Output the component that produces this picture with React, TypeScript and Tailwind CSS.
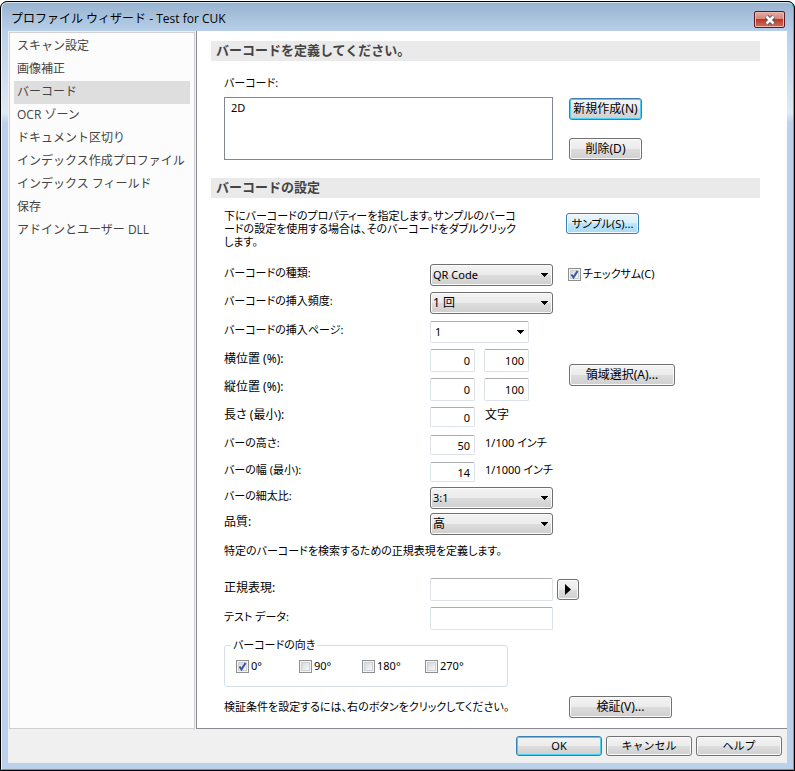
import type { ReactNode } from "react";

const UI = "font-['Noto_Sans','Noto_Sans_CJK_JP',sans-serif]";
const face = "bg-[linear-gradient(#f3f3f3,#ebebeb_50%,#dddddd_50%,#cfcfcf)]";
const faceInset = "border border-[#707070] shadow-[inset_0_0_0_1px_#fbfbfb]";
const faceDefault = "border border-[#3c7fb1] shadow-[inset_0_0_0_1px_#48d1f4]";
const field =
  "border border-[#dde2ea] border-t-[#abadb3] rounded-[2px] bg-white text-[11px] leading-[14px] px-1 outline-none";

function Btn({ className = "", variant = "normal", size = "text-[11px]", children }: { className?: string; variant?: "normal" | "default" | "hot"; size?: string; children: ReactNode }) {
  const look =
    variant === "default"
      ? `${face} ${faceDefault}`
      : variant === "hot"
        ? "border border-[#3c7fb1] shadow-[inset_0_0_0_1px_#f4fbfe] bg-[linear-gradient(#eaf6fd,#d9f0fc_50%,#bee6fd_50%,#a7d9f5)]"
        : `${face} ${faceInset}`;
  return (
    <button type="button" className={`flex shrink-0 items-center justify-center whitespace-nowrap rounded-[3px] leading-[14px] ${size} ${look} ${className}`}>
      {children}
    </button>
  );
}

function Drop({ id, value, plain = false, size = "text-[11px]", className }: { id: string; value: string; plain?: boolean; size?: string; className: string }) {
  const look = plain ? "border border-[#dde2ea] border-t-[#abadb3] rounded-[2px] bg-white pl-1" : `${face} ${faceInset} rounded-[3px] pl-[2px]`;
  return (
    <div className={`relative ${className}`}>
      <select id={id} defaultValue={value} className={`h-[22px] w-full appearance-none leading-[14px] outline-none ${size} ${look}`}>
        <option>{value}</option>
      </select>
      <svg className="pointer-events-none absolute right-[5px] top-[9px] h-1 w-[7px]" viewBox="0 0 7 4" aria-hidden="true" shapeRendering="crispEdges">
        <path d="M0 0h7v1H0zM1 1h5v1H1zM2 2h3v1H2zM3 3h1v1H3z" fill="#000" />
      </svg>
    </div>
  );
}

function Check({ label, checked = false, className = "" }: { label: string; checked?: boolean; className?: string }) {
  return (
    <label className={`flex items-center gap-[2px] whitespace-nowrap ${className}`}>
      <span className="relative flex">
        <input
          type="checkbox"
          defaultChecked={checked}
          className="peer size-[13px] appearance-none border border-[#8e8f8f] bg-[linear-gradient(135deg,#cbcfd5,#f6f6f6_80%)] shadow-[inset_0_0_0_1px_#f4f4f4,inset_0_0_0_2px_#cdd1d6]"
        />
        <svg className="pointer-events-none absolute left-0 top-0 hidden size-[13px] peer-checked:block" viewBox="0 0 13 13" aria-hidden="true">
          <path d="M3.500 6.500L5.500 9.500L9.500 3" fill="none" stroke="#3a559b" strokeWidth="2" />
        </svg>
      </span>
      {label}
    </label>
  );
}

function Row({ id, label, h = "h-7", size = "text-[11px]", children }: { id: string; label: string; h?: string; size?: string; children: ReactNode }) {
  return (
    <div className={`flex items-center ${size} ${h}`}>
      <label htmlFor={id} className="w-[206px] shrink-0 pb-1">{label}</label>
      {children}
    </div>
  );
}

function Num({ id, value, h = "h-5", label }: { id: string; value: string; h?: string; label?: string }) {
  return <input id={id} aria-label={label} defaultValue={value} className={`w-[45px] shrink-0 text-right ${field} ${h}`} />;
}

function Heading({ children }: { children: ReactNode }) {
  return <h2 className="mr-[27px] h-5 bg-[#eaeaea] pl-[5px] font-['Open_Sans','Noto_Sans_CJK_JP',sans-serif] text-[13px] font-bold leading-[18px] text-[#444]">{children}</h2>;
}

const nav = ["スキャン設定", "画像補正", "バーコード", "OCR ゾーン", "ドキュメント区切り", "インデックス作成プロファイル", "インデックス フィールド", "保存", "アドインとユーザー DLL"];

export default function App() {
  return (
    <div className={`min-h-screen bg-white pt-px text-[11px] leading-[14px] text-black ${UI}`}>
      <div className="rounded-t-[7px] border border-black bg-black">
        <div className="flex flex-col rounded-t-[6px] border border-b-[#1fb8d0] border-l-[#e8f2fa] border-r-[#1fc4dc] border-t-[#d3e8f4] bg-[linear-gradient(#99b4d1,#b9d1ea_30px,#dfe9f5_110px,#b9d1ea_120px)] px-[6px] pb-[6px]">
          <header className="flex h-7 items-center justify-between pl-[3px] pr-[2px]">
            <h1 className="pt-1 font-['Open_Sans','Noto_Sans_CJK_JP',sans-serif] text-[12px]">プロファイル ウィザード - Test for CUK</h1>
            <button type="button" aria-label="閉じる" className="mt-[5px] flex h-[17px] w-[31px] items-center justify-center rounded-[2px] border border-[#5a1c22] bg-[linear-gradient(#e5aca4,#d98679_45%,#b93a26_50%,#d0705c)] shadow-[inset_0_0_0_1px_#e9b9b0]">
              <svg className="h-[10px] w-3" viewBox="0 0 12 10" aria-hidden="true">
                <path d="M2.500 1.500L9.500 8.500M9.500 1.500L2.500 8.500" stroke="#535666" strokeWidth="4.500" />
                <path d="M2.500 1.500L9.500 8.500M9.500 1.500L2.500 8.500" stroke="#fff" strokeWidth="2.500" />
              </svg>
            </button>
          </header>
          <div className="flex bg-[#f0f0f0]">
            <nav className="ml-px mt-px w-[186px] shrink-0 border border-[#d0d0d0] bg-[#fcfcfc] px-1 pt-[2px] font-['Open_Sans','Noto_Sans_CJK_JP',sans-serif] text-[12px] text-[#444]">
              <ul>
                {nav.map((n) => (
                  <li key={n}>
                    <a href="#" aria-current={n === "バーコード" ? "page" : undefined} className={`block h-[23px] whitespace-nowrap pl-[3px] leading-[22px] ${n === "バーコード" ? "bg-[#dedede]" : ""}`}>
                      {n}
                    </a>
                  </li>
                ))}
              </ul>
            </nav>
            <main className="ml-px min-w-0 grow border-b border-l border-[#8b8b94] bg-white pb-[10px] pl-[14px] pt-[10px]">
              <Heading>バーコードを定義してください。</Heading>
              <div className="pl-[13px] [font-feature-settings:'palt']">
                <label htmlFor="codes" className="block pt-[15px]">バーコード:</label>
                <div className="flex pt-[7px]">
                  <select id="codes" size={4} className="h-[63px] w-[329px] shrink-0 appearance-none overflow-hidden border border-[#828790] bg-white text-[11px] outline-none">
                    <option className="px-[6px] pt-[2px]">2D</option>
                  </select>
                  <div className="flex flex-col gap-[18px] pl-4 pt-px">
                    <Btn variant="default" size="text-[12px]" className="h-[22px] w-[73px]">新規作成(N)</Btn>
                    <Btn size="text-[12px]" className="h-[22px] w-[73px]">削除(D)</Btn>
                  </div>
                </div>
              </div>
              <div className="h-[18px]" />
              <Heading>バーコードの設定</Heading>
              <div className="pl-[13px] [font-feature-settings:'palt']">
                <div className="flex h-[63px] pt-3">
                  <p className="w-[342px] shrink-0 whitespace-nowrap font-['Liberation_Sans','Noto_Sans_CJK_JP',sans-serif] leading-[13px]">
                    下にバーコードのプロパティーを指定します。サンプルのバーコ
                    <br />
                    ードの設定を使用する場合は、そのバーコードをダブルクリック
                    <br />
                    します。
                  </p>
                  <Btn variant="hot" className="mt-[3px] h-[21px] w-[73px]">サンプル(S)...</Btn>
                </div>
                <Row id="type" label="バーコードの種類:">
                  <Drop id="type" value="QR Code" className="w-[123px]" />
                  <Check label="チェックサム(C)" checked className="ml-[15px] pb-[2px]" />
                </Row>
                <Row id="freq" label="バーコードの挿入頻度:">
                  <Drop id="freq" value="1 回" size="text-[12px]" className="w-[123px]" />
                </Row>
                <Row id="page" label="バーコードの挿入ページ:" h="h-[29px]">
                  <Drop id="page" value="1" plain className="w-[99px]" />
                </Row>
                <div className="flex items-center">
                  <div>
                    <Row id="hx" label="横位置 (%):" h="h-[29px]" size="text-[12px]">
                      <div className="flex gap-[9px]">
                        <Num id="hx" value="0" h="h-[23px]" />
                        <Num id="hx2" label="横位置 終了" value="100" h="h-[23px]" />
                      </div>
                    </Row>
                    <Row id="vy" label="縦位置 (%):" size="text-[12px]">
                      <div className="flex gap-[9px]">
                        <Num id="vy" value="0" h="h-[23px]" />
                        <Num id="vy2" label="縦位置 終了" value="100" h="h-[23px]" />
                      </div>
                    </Row>
                  </div>
                  <Btn size="text-[12px]" className="ml-10 h-[22px] w-[106px]">領域選択(A)...</Btn>
                </div>
                <Row id="len" label="長さ (最小):" size="text-[12px]">
                  <Num id="len" value="0" />
                  <span className="pb-1 pl-[10px]">文字</span>
                </Row>
                <Row id="bh" label="バーの高さ:">
                  <Num id="bh" value="50" />
                  <span className="pb-1 pl-[10px]">1/100 インチ</span>
                </Row>
                <Row id="bw" label="バーの幅 (最小):" h="h-[26px]">
                  <Num id="bw" value="14" />
                  <span className="pb-1 pl-[10px]">1/1000 インチ</span>
                </Row>
                <Row id="ratio" label="バーの細太比:" h="h-[26px]">
                  <Drop id="ratio" value="3:1" className="w-[123px]" />
                </Row>
                <Row id="quality" label="品質:" h="h-[26px]" size="text-[12px]">
                  <Drop id="quality" value="高" size="text-[12px]" className="w-[123px]" />
                </Row>
                <p className="pb-[17px] pt-[7px]">特定のバーコードを検索するための正規表現を定義します。</p>
                <Row id="re" label="正規表現:" h="h-[29px]" size="text-[12px]">
                  <input id="re" className={`h-[23px] w-[123px] ${field}`} />
                  <button type="button" aria-label="挿入" className={`ml-1 flex h-[21px] w-[22px] items-center justify-center rounded-[3px] ${face} ${faceInset}`}>
                    <svg className="h-[11px] w-[6px]" viewBox="0 0 6 11" aria-hidden="true">
                      <path d="M0 0v11L6 5.500z" fill="#000" />
                    </svg>
                  </button>
                </Row>
                <Row id="test" label="テスト データ:" h="h-[29px]">
                  <input id="test" className={`h-[23px] w-[123px] ${field}`} />
                </Row>
                <fieldset className="mt-[5px] h-[49px] w-[284px] rounded-[3px] border border-[#d5dfe5] px-[11px]">
                  <legend className="-ml-[5px] px-[2px]">バーコードの向き</legend>
                  <div className="grid grid-cols-[63px_63px_63px_63px] pt-[7px]">
                    <Check label="0°" checked />
                    <Check label="90°" />
                    <Check label="180°" />
                    <Check label="270°" />
                  </div>
                </fieldset>
                <div className="flex items-center pt-[9px]">
                  <p className="w-[345px] shrink-0 whitespace-nowrap">検証条件を設定するには、右のボタンをクリックしてください。</p>
                  <Btn size="text-[12px]" className="h-[22px] w-[103px]">検証(V)...</Btn>
                </div>
              </div>
            </main>
          </div>
          <footer className="flex h-[34px] items-center justify-end gap-1 bg-[#f0f0f0] pr-[5px]">
            <Btn variant="default" className="h-5 w-[86px]">OK</Btn>
            <Btn className="h-5 w-[86px]">キャンセル</Btn>
            <Btn className="h-5 w-[86px]">ヘルプ</Btn>
          </footer>
        </div>
      </div>
    </div>
  );
}
